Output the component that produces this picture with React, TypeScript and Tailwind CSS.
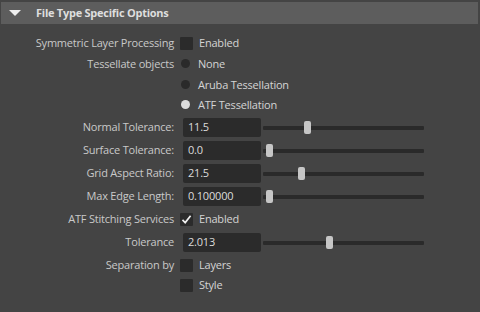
import React from 'react';

const font = { fontFamily: '"Open Sans", "Liberation Sans", sans-serif' };

function Label({ children }: { children: React.ReactNode }) {
  return <div className="w-[174px] shrink-0 text-right tracking-[-0.2px] text-[#c9c9c9]">{children}</div>;
}

function Check({ checked = false, text }: { checked?: boolean; text?: string }) {
  return (
    <div className="ml-[6px] flex items-center">
      <div className="flex h-[13px] w-[13px] items-center justify-center rounded-[1px] bg-[#2b2b2b]">
        {checked && (
          <svg width="11" height="11" viewBox="0 0 11 11">
            <path d="M1.5 5.8 L4.2 8.6 L9.6 1.8" fill="none" stroke="#f0f0f0" strokeWidth="1.7" />
          </svg>
        )}
      </div>
      {text && <span className="ml-[6px] tracking-[-0.2px] text-[#d4d4d4]">{text}</span>}
    </div>
  );
}

function Radio({ on = false, text }: { on?: boolean; text: string }) {
  return (
    <div className="ml-[7px] flex items-center">
      <div className={`-mt-[2px] h-[9px] w-[9px] rounded-full ${on ? 'bg-[#dcdcdc]' : 'bg-[#2a2a2a]'}`} />
      <span className="ml-[8px] tracking-[-0.2px] text-[#d4d4d4]">{text}</span>
    </div>
  );
}

function Field({ value, thumb }: { value: string; thumb: number }) {
  return (
    <div className="ml-[9px] flex items-center">
      <div className="flex h-[19px] w-[78px] items-center rounded-[2px] bg-[#2b2b2b] pl-[5px] tracking-[-0.2px] text-[#dcdcdc]">{value}</div>
      <div className="relative ml-[2px] flex h-[13px] w-[161px] items-center">
        <div className="h-[4px] w-full rounded-[1px] bg-[#2a2a2a]" />
        <div className="absolute top-0 h-[13px] w-[7px] rounded-[2px] bg-[#c6c6c6]" style={{ left: thumb }} />
      </div>
    </div>
  );
}

export default function App() {
  return (
    <div className="h-[312px] w-[480px] bg-[#444444] text-[11px]" style={font}>
      <div className="pt-[2px] pl-[1px] pr-[2px]">
        <div className="flex h-[22px] items-center bg-[#5d5d5d]">
          <svg width="12" height="6" viewBox="0 0 12 6" className="ml-[8px]">
            <path d="M0 0 L12 0 L6 6 Z" fill="#eeeeee" />
          </svg>
          <span className="ml-[15px] text-[11px] font-bold tracking-[-0.25px] text-[#dedede]">File Type Specific Options</span>
        </div>
      </div>

      <div className="mt-[8px] flex flex-col">
        <div className="flex h-[22px] items-center">
          <Label>Symmetric Layer Processing</Label>
          <Check text="Enabled" />
        </div>
        <div className="flex h-[21px] items-center">
          <Label>Tessellate objects</Label>
          <Radio text="None" />
        </div>
        <div className="flex h-[20px] items-center">
          <Label>{''}</Label>
          <Radio text="Aruba Tessellation" />
        </div>
        <div className="flex h-[21px] items-center">
          <Label>{''}</Label>
          <Radio on text="ATF Tessellation" />
        </div>
        <div className="flex h-[23px] items-center">
          <Label>Normal Tolerance:</Label>
          <Field value="11.5" thumb={41} />
        </div>
        <div className="flex h-[23px] items-center">
          <Label>Surface Tolerance:</Label>
          <Field value="0.0" thumb={3} />
        </div>
        <div className="flex h-[23px] items-center">
          <Label>Grid Aspect Ratio:</Label>
          <Field value="21.5" thumb={35} />
        </div>
        <div className="flex h-[23px] items-center">
          <Label>Max Edge Length:</Label>
          <Field value="0.100000" thumb={3} />
        </div>
        <div className="flex h-[23px] items-center">
          <Label>ATF Stitching Services</Label>
          <Check checked text="Enabled" />
        </div>
        <div className="flex h-[23px] items-center">
          <Label>Tolerance</Label>
          <Field value="2.013" thumb={63} />
        </div>
        <div className="flex h-[22px] items-center">
          <Label>Separation by</Label>
          <Check text="Layers" />
        </div>
        <div className="flex h-[18px] items-center">
          <Label>{''}</Label>
          <Check text="Style" />
        </div>
      </div>
    </div>
  );
}
